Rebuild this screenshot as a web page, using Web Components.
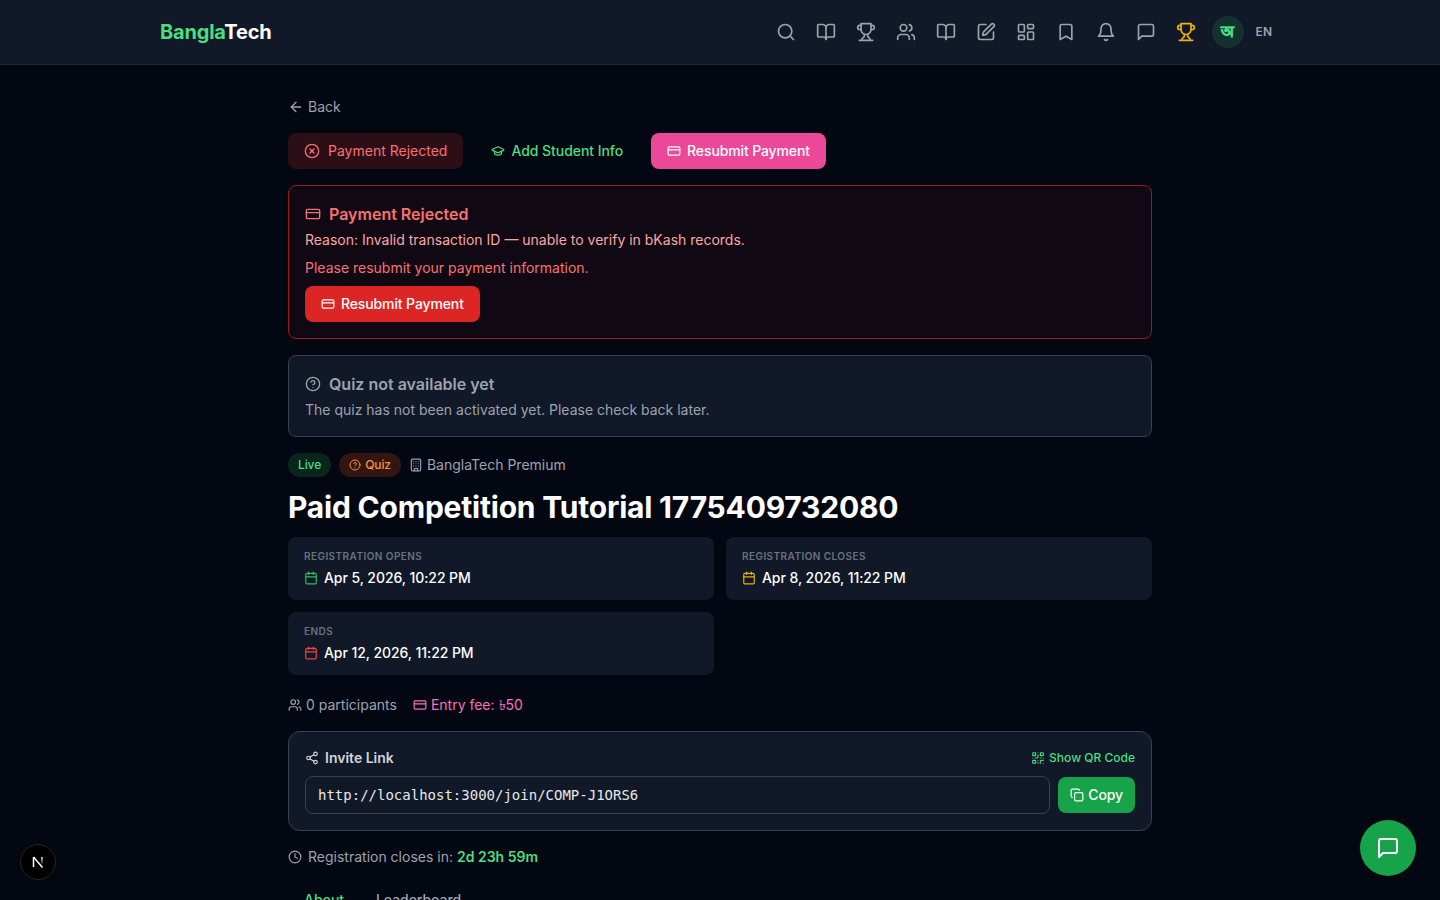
<!DOCTYPE html>
<html lang="en">
<head>
<meta charset="utf-8">
<title>BanglaTech</title>
<style>
html, body { margin: 0; height: 900px; overflow: hidden; background: #030712; }
body { font-family: Inter, "Noto Sans", sans-serif; color: #fff; }
</style>
</head>
<body>
<bt-nav></bt-nav>
<bt-page>
  <bt-back>Back</bt-back>
  <bt-steps>
    <bt-step kind="rejected" icon="circle-x">Payment Rejected</bt-step>
    <bt-step kind="info" icon="cap">Add Student Info</bt-step>
    <bt-step kind="active" icon="card">Resubmit Payment</bt-step>
  </bt-steps>
  <bt-alert kind="danger" icon="card" heading="Payment Rejected">
    <p class="reason">Reason: Invalid transaction ID — unable to verify in bKash records.</p>
    <p class="hint">Please resubmit your payment information.</p>
    <bt-button color="#dc2626" icon="card">Resubmit Payment</bt-button>
  </bt-alert>
  <bt-alert kind="muted" icon="help" heading="Quiz not available yet">
    <p class="plain">The quiz has not been activated yet. Please check back later.</p>
  </bt-alert>
  <bt-meta>
    <bt-badge kind="live">Live</bt-badge>
    <bt-badge kind="quiz" icon="help">Quiz</bt-badge>
    <bt-org>BanglaTech Premium</bt-org>
  </bt-meta>
  <bt-title>Paid Competition Tutorial 1775409732080</bt-title>
  <bt-dates>
    <bt-date label="Registration Opens" color="#22c55e">Apr 5, 2026, 10:22 PM</bt-date>
    <bt-date label="Registration Closes" color="#eab308">Apr 8, 2026, 11:22 PM</bt-date>
    <bt-date label="Ends" color="#ef4444">Apr 12, 2026, 11:22 PM</bt-date>
  </bt-dates>
  <bt-stats></bt-stats>
  <bt-invite url="http://localhost:3000/join/COMP-J1ORS6"></bt-invite>
  <bt-countdown>2d 23h 59m</bt-countdown>
  <bt-tabs></bt-tabs>
</bt-page>
<bt-chat></bt-chat>
<bt-dev></bt-dev>

<script>
const ICONS = {
  search: '<circle cx="11" cy="11" r="8"/><path d="m21 21-4.3-4.3"/>',
  book: '<path d="M12 7v14"/><path d="M3 18a1 1 0 0 1-1-1V4a1 1 0 0 1 1-1h5a4 4 0 0 1 4 4 4 4 0 0 1 4-4h5a1 1 0 0 1 1 1v13a1 1 0 0 1-1 1h-6a3 3 0 0 0-3 3 3 3 0 0 0-3-3z"/>',
  trophy: '<path d="M6 9H4.5a2.5 2.5 0 0 1 0-5H6"/><path d="M18 9h1.5a2.5 2.5 0 0 0 0-5H18"/><path d="M4 22h16"/><path d="M10 14.66V17c0 .55-.47.98-.97 1.21C7.85 18.75 7 20.24 7 22"/><path d="M14 14.66V17c0 .55.47.98.97 1.21C16.15 18.75 17 20.24 17 22"/><path d="M18 2H6v7a6 6 0 0 0 12 0V2Z"/>',
  users: '<path d="M16 21v-2a4 4 0 0 0-4-4H6a4 4 0 0 0-4 4v2"/><circle cx="9" cy="7" r="4"/><path d="M22 21v-2a4 4 0 0 0-3-3.87"/><path d="M16 3.13a4 4 0 0 1 0 7.75"/>',
  pen: '<path d="M12 3H5a2 2 0 0 0-2 2v14a2 2 0 0 0 2 2h14a2 2 0 0 0 2-2v-7"/><path d="M18.375 2.625a1 1 0 0 1 3 3l-9.013 9.014a2 2 0 0 1-.853.505l-2.873.84a.5.5 0 0 1-.62-.62l.84-2.873a2 2 0 0 1 .506-.852z"/>',
  dashboard: '<rect x="3" y="3" width="7" height="9" rx="1"/><rect x="14" y="3" width="7" height="5" rx="1"/><rect x="14" y="12" width="7" height="9" rx="1"/><rect x="3" y="16" width="7" height="5" rx="1"/>',
  bookmark: '<path d="m19 21-7-4-7 4V5a2 2 0 0 1 2-2h10a2 2 0 0 1 2 2v16z"/>',
  bell: '<path d="M6 8a6 6 0 0 1 12 0c0 7 3 9 3 9H3s3-2 3-9"/><path d="M10.3 21a1.94 1.94 0 0 0 3.4 0"/>',
  message: '<path d="M21 15a2 2 0 0 1-2 2H7l-4 4V5a2 2 0 0 1 2-2h14a2 2 0 0 1 2 2z"/>',
  'arrow-left': '<path d="m12 19-7-7 7-7"/><path d="M19 12H5"/>',
  'circle-x': '<circle cx="12" cy="12" r="10"/><path d="m15 9-6 6"/><path d="m9 9 6 6"/>',
  cap: '<path d="M21.42 10.922a1 1 0 0 0-.019-1.838L12.83 5.18a2 2 0 0 0-1.66 0L2.6 9.08a1 1 0 0 0 0 1.832l8.57 3.908a2 2 0 0 0 1.66 0z"/><path d="M6 12.5V16a6 3 0 0 0 12 0v-3.5"/>',
  card: '<rect x="2" y="5" width="20" height="14" rx="2"/><path d="M2 10h20"/>',
  help: '<circle cx="12" cy="12" r="10"/><path d="M9.09 9a3 3 0 0 1 5.83 1c0 2-3 3-3 3"/><path d="M12 17h.01"/>',
  building: '<rect x="4" y="2" width="16" height="20" rx="2"/><path d="M9 22v-4h6v4"/><path d="M8 6h.01M16 6h.01M12 6h.01M12 10h.01M12 14h.01M16 10h.01M16 14h.01M8 10h.01M8 14h.01"/>',
  calendar: '<path d="M8 2v4"/><path d="M16 2v4"/><rect x="3" y="4" width="18" height="18" rx="2"/><path d="M3 10h18"/>',
  share: '<circle cx="18" cy="5" r="3"/><circle cx="6" cy="12" r="3"/><circle cx="18" cy="19" r="3"/><path d="m8.59 13.51 6.83 3.98"/><path d="m15.41 6.51-6.82 3.98"/>',
  qr: '<rect x="3" y="3" width="5" height="5" rx="1"/><rect x="16" y="3" width="5" height="5" rx="1"/><rect x="3" y="16" width="5" height="5" rx="1"/><path d="M21 16h-3a2 2 0 0 0-2 2v3"/><path d="M21 21v.01"/><path d="M12 7v3a2 2 0 0 1-2 2H7"/><path d="M3 12h.01"/><path d="M12 3h.01"/><path d="M12 16v.01"/><path d="M16 12h1"/><path d="M21 12v.01"/><path d="M12 21v-1"/>',
  copy: '<rect x="8" y="8" width="14" height="14" rx="2"/><path d="M4 16c-1.1 0-2-.9-2-2V4c0-1.1.9-2 2-2h10c1.1 0 2 .9 2 2"/>',
  clock: '<circle cx="12" cy="12" r="10"/><path d="M12 6v6l4 2"/>'
};

// little helper, every element below is only markup + styles
function define(tag, styles, markup) {
  customElements.define(tag, class extends HTMLElement {
    constructor() {
      super();
      this._shadowRoot_ = this.attachShadow({ mode: 'open' });
    }
    connectedCallback() {
      this._shadowRoot_.innerHTML = `<style>${styles}</style>` + markup(this);
    }
  });
}

define('bt-icon', `
  :host { display: inline-flex; flex: none; width: var(--size, 16px); height: var(--size, 16px); }
  svg { width: 100%; height: 100%; fill: none; stroke: currentColor; stroke-width: 2; stroke-linecap: round; stroke-linejoin: round; }
`, el => `<svg viewBox="0 0 24 24">${ICONS[el.getAttribute('name')]}</svg>`);

define('bt-nav', `
  :host { display: block; height: 64px; background: #111827; border-bottom: 1px solid #1f2937; }
  .in { width: 1120px; height: 64px; margin: 0 auto; display: flex; align-items: center; justify-content: space-between; }
  .logo { font-size: 20px; font-weight: 700; line-height: 28px; color: #fff; letter-spacing: -.2px; }
  .logo b { color: #4ade80; font-weight: 700; }
  .links { display: flex; align-items: center; }
  .btn { width: 40px; height: 40px; display: flex; align-items: center; justify-content: center; color: #9ca3af; --size: 20px; }
  .gold { color: #eab308; }
  .lang { width: 32px; height: 32px; margin-left: 6px; border-radius: 50%; background: rgba(34,197,94,.15); color: #4ade80; font-size: 15px; line-height: 30px; font-weight: 700; text-align: center; font-family: "Noto Sans", Inter, sans-serif; -webkit-text-stroke: .6px #4ade80; }
  .en { margin: 0 8px 0 12px; font-size: 12px; line-height: 16px; font-weight: 600; color: #9ca3af; }
`, () => `<div class="in">
  <div class="logo"><b>Bangla</b>Tech</div>
  <div class="links">
    ${['search','book','trophy','users','book','pen','dashboard','bookmark','bell','message'].map(n => `<div class="btn"><bt-icon name="${n}"></bt-icon></div>`).join('')}
    <div class="btn gold"><bt-icon name="trophy"></bt-icon></div>
    <div class="lang">অ</div>
    <div class="en">EN</div>
  </div>
</div>`);

define('bt-page', `
  :host { display: flex; flex-direction: column; width: 864px; margin: 0 auto; padding-top: 32px; }
`, () => `<slot></slot>`);

define('bt-back', `
  :host { display: flex; align-items: center; gap: 4px; height: 20px; margin-bottom: 16px; font-size: 14px; line-height: 20px; color: #9ca3af; --size: 16px; }
`, () => `<bt-icon name="arrow-left"></bt-icon><slot></slot>`);

define('bt-steps', `
  :host { display: flex; gap: 12px; margin-bottom: 16px; }
`, () => `<slot></slot>`);

define('bt-step', `
  :host { display: flex; align-items: center; gap: 8px; height: 36px; padding: 0 16px; border-radius: 8px; font-size: 14px; line-height: 20px; font-weight: 400; --size: 16px; }
  :host([kind=rejected]) { background: rgba(127,29,29,.33); color: #f87171; }
  :host([kind=info]) { color: #4ade80; gap: 6px; font-weight: 500; letter-spacing: -.05px; --size: 14px; }
  :host([kind=active]) { background: #ec4899; color: #fff; font-weight: 500; gap: 6px; letter-spacing: -.12px; --size: 14px; }
`, el => `<bt-icon name="${el.getAttribute('icon')}"></bt-icon><slot></slot>`);

define('bt-alert', `
  :host { display: block; border-radius: 8px; padding: 16px; margin-bottom: 16px; border: 1px solid; }
  :host([kind=danger]) { background: rgba(127,29,29,.11); border-color: #991b1b; --head: #f87171; --size: 16px; }
  :host([kind=muted]) { background: #111827; border-color: #374151; --head: #9ca3af; --size: 16px; }
  .head { display: flex; align-items: center; gap: 8px; height: 24px; margin-bottom: 4px; color: var(--head); font-size: 16px; font-weight: 600; line-height: 24px; }
  ::slotted(p) { margin: 0; font-size: 14px; line-height: 20px; }
  ::slotted(.reason) { color: #fca5a5; margin-bottom: 8px; }
  ::slotted(.hint) { color: #f87171; margin-bottom: 8px; }
  ::slotted(.plain) { color: #9ca3af; }
`, el => `<div class="head"><bt-icon name="${el.getAttribute('icon')}"></bt-icon>${el.getAttribute('heading')}</div><slot></slot>`);

define('bt-button', `
  :host { display: inline-flex; align-items: center; gap: var(--btn-gap, 6px); height: 36px; padding: 0 var(--btn-pad, 16px); border-radius: 8px; color: #fff; font-size: 14px; line-height: 20px; font-weight: 500; letter-spacing: -.12px; --size: 14px; }
`, el => `<style>:host { background: ${el.getAttribute('color')}; }</style><bt-icon name="${el.getAttribute('icon')}"></bt-icon><slot></slot>`);

define('bt-meta', `
  :host { display: flex; align-items: center; gap: 8px; height: 24px; margin-bottom: 12px; }
`, () => `<slot></slot>`);

define('bt-badge', `
  :host { display: inline-flex; align-items: center; gap: 4px; height: 24px; padding: 0 10px; border-radius: 999px; font-size: 12px; line-height: 16px; font-weight: 500; letter-spacing: -.1px; --size: 12px; }
  :host([kind=live]) { background: rgba(20,83,45,.4); color: #4ade80; }
  :host([kind=quiz]) { background: rgba(124,45,18,.4); color: #fb923c; }
`, el => `${el.getAttribute('icon') ? `<bt-icon name="${el.getAttribute('icon')}"></bt-icon>` : ''}<slot></slot>`);

define('bt-org', `
  :host { display: inline-flex; align-items: center; gap: 4px; font-size: 14px; line-height: 20px; color: #9ca3af; --size: 14px; }
`, () => `<bt-icon name="building"></bt-icon><slot></slot>`);

define('bt-title', `
  :host { display: block; font-size: 30px; line-height: 36px; font-weight: 700; letter-spacing: -.21px; color: #fff; margin-bottom: 12px; }
`, () => `<slot></slot>`);

define('bt-dates', `
  :host { display: grid; grid-template-columns: 1fr 1fr; gap: 12px; margin-bottom: 20px; }
`, () => `<slot></slot>`);

define('bt-date', `
  :host { display: block; background: #111827; border-radius: 8px; padding: 12px 16px; height: 63px; box-sizing: border-box; }
  .label { font-size: 10px; line-height: 15px; font-weight: 600; letter-spacing: .44px; text-transform: uppercase; color: #6b7280; margin-bottom: 4px; }
  .val { display: flex; align-items: center; gap: 6px; font-size: 14px; line-height: 20px; font-weight: 500; letter-spacing: -.07px; color: #fff; --size: 14px; }
`, el => `<div class="label">${el.getAttribute('label')}</div>
<div class="val"><bt-icon name="calendar" style="color:${el.getAttribute('color')}"></bt-icon><slot></slot></div>`);

define('bt-stats', `
  :host { display: flex; gap: 16px; height: 20px; margin-bottom: 16px; font-size: 14px; line-height: 20px; --size: 14px; }
  span { display: flex; align-items: center; gap: 4px; }
  .p { color: #9ca3af; }
  .f { color: #f472b6; }
`, () => `<span class="p"><bt-icon name="users"></bt-icon>0 participants</span><span class="f"><bt-icon name="card"></bt-icon>Entry fee: ৳50</span>`);

define('bt-invite', `
  :host { display: block; background: #111827; border: 1px solid #374151; border-radius: 12px; padding: 16px; margin-bottom: 16px; height: 100px; box-sizing: border-box; }
  .top { display: flex; align-items: center; justify-content: space-between; height: 20px; margin-bottom: 8px; }
  .h { display: flex; align-items: center; gap: 6px; font-size: 14px; line-height: 20px; font-weight: 600; color: #d1d5db; --size: 14px; }
  .qr { display: flex; align-items: center; gap: 4px; font-size: 12px; line-height: 16px; font-weight: 500; color: #4ade80; --size: 14px; }
  .row { display: flex; gap: 8px; align-items: center; }
  .url { flex: 1; height: 38px; box-sizing: border-box; border: 1px solid #374151; border-radius: 8px; background: #111827; padding: 0 12px; display: flex; align-items: center; font-family: "DejaVu Sans Mono", monospace; font-size: 14px; color: #e5e7eb; }
  bt-button { --btn-pad: 12px; --btn-gap: 4px; }
`, el => `<div class="top">
  <div class="h"><bt-icon name="share"></bt-icon>Invite Link</div>
  <div class="qr"><bt-icon name="qr"></bt-icon>Show QR Code</div>
</div>
<div class="row">
  <div class="url">${el.getAttribute('url')}</div>
  <bt-button color="#16a34a" icon="copy">Copy</bt-button>
</div>`);

define('bt-countdown', `
  :host { display: flex; align-items: center; gap: 6px; height: 20px; margin-bottom: 23px; font-size: 14px; line-height: 20px; color: #9ca3af; --size: 14px; }
  b { color: #4ade80; font-weight: 600; margin-left: -2px; }
`, () => `<bt-icon name="clock"></bt-icon>Registration closes in: <b><slot></slot></b>`);

define('bt-tabs', `
  :host { display: flex; gap: 32px; padding: 0 16px; font-size: 14px; line-height: 20px; font-weight: 500; letter-spacing: -.05px; color: #9ca3af; }
  .on { color: #4ade80; }
`, () => `<span class="on">About</span><span>Leaderboard</span>`);

define('bt-chat', `
  :host { position: fixed; right: 24px; bottom: 24px; width: 56px; height: 56px; border-radius: 50%; background: #16a34a; color: #fff; display: flex; align-items: center; justify-content: center; --size: 24px; }
`, () => `<bt-icon name="message"></bt-icon>`);

define('bt-dev', `
  :host { position: fixed; left: 20px; bottom: 20px; width: 36px; height: 36px; box-sizing: border-box; border-radius: 50%; background: #000; border: 1px solid #262626; display: flex; align-items: center; justify-content: center; }
  svg { width: 16px; height: 16px; }
`, () => `<svg viewBox="0 0 16 16"><defs><linearGradient id="f" x1="0" y1="0" x2="0" y2="1"><stop offset="0" stop-color="#fff"/><stop offset="1" stop-color="#fff" stop-opacity=".15"/></linearGradient></defs><path d="M3.5 3v10" stroke="#fff" stroke-width="1.5" fill="none"/><path d="M3.5 3 12.5 13.5" stroke="#fff" stroke-width="1.5" fill="none"/><rect x="11.2" y="3" width="1.5" height="7" fill="url(#f)"/></svg>`);
</script>
</body>
</html>
